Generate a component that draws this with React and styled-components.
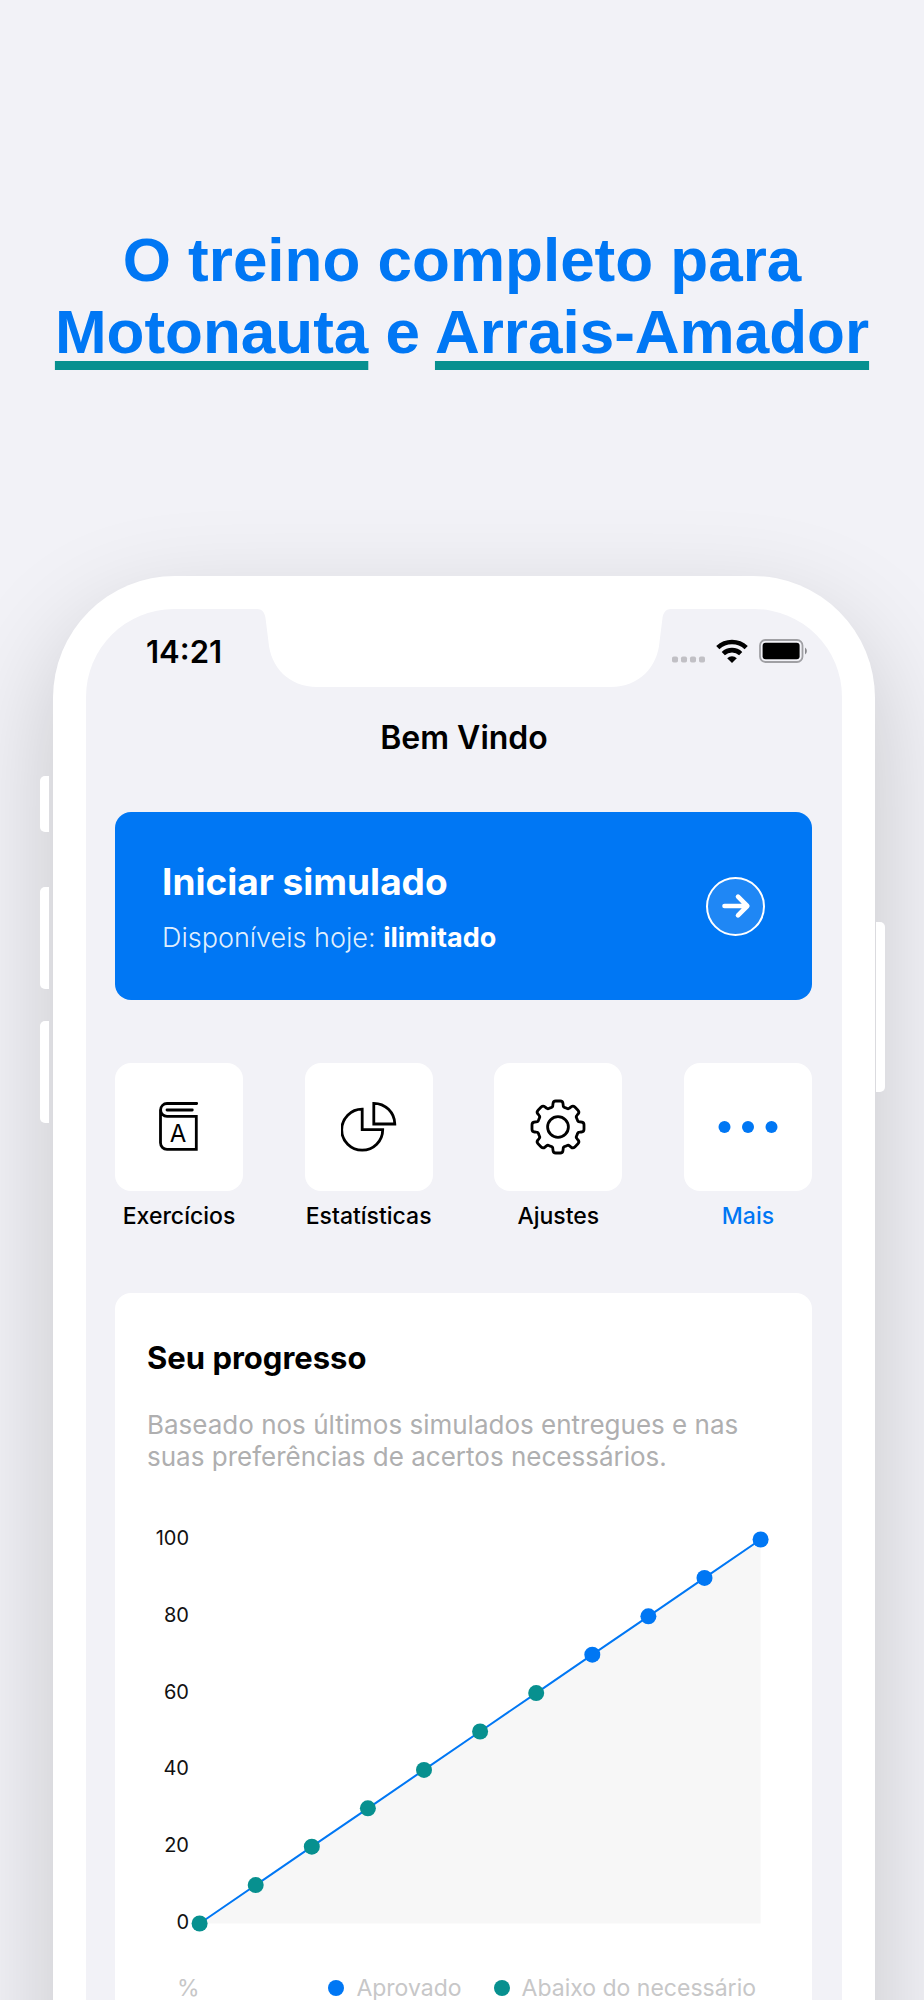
import React from "react";
import styled, { createGlobalStyle } from "styled-components";

const BLUE = "#0077f4";
const TEAL = "#07908f";

const ticks = [0, 20, 40, 60, 80, 100];
const results = [0, 10, 20, 30, 40, 50, 60, 70, 80, 90, 100];
const REQUIRED = 70;

const chartX = (i) => 52.6 + i * 56.1;
const chartY = (value) => 403.5 - value * 3.84;

// one tooth of the gear, repeated every 45 degrees
const gearPath = () => {
  const out = [];
  for (let i = 0; i < 8; i++) {
    const a = (i * Math.PI) / 4;
    const p = (x, y) =>
      `${(x * Math.cos(a) - y * Math.sin(a)).toFixed(2)} ${(
        x * Math.sin(a) +
        y * Math.cos(a)
      ).toFixed(2)}`;
    out.push(
      `${i ? "L" : "M"}${p(-7, -19.4)}`,
      `Q${p(-5.2, -19.8)} ${p(-5.2, -21.6)}`,
      `L${p(-5, -23.4)}`,
      `Q${p(-4.8, -26)} ${p(-2.2, -26)}`,
      `L${p(2.2, -26)}`,
      `Q${p(4.8, -26)} ${p(5, -23.4)}`,
      `L${p(5.2, -21.6)}`,
      `Q${p(5.2, -19.8)} ${p(7, -19.4)}`
    );
  }
  return out.join(" ") + "Z";
};

const BookIcon = () => (
  <Icon viewBox="0 0 56 56">
    <path d="M45.7 4.5H16a6.4 6.4 0 0 0 0 12.8H45.3V50.3H16a6.5 6.5 0 0 1-6.5-6.5V11" />
    <path d="M16 11H41.3" />
    <IconLetter x="27" y="42.5" textAnchor="middle">
      A
    </IconLetter>
  </Icon>
);

const PieIcon = () => (
  <Icon viewBox="0 0 56 56">
    <path d="M21.2 10.2A20.5 20.5 0 1 0 41.7 30.7H21.2Z" />
    <path d="M32.8 4.3A21 21 0 0 1 53.8 25H32.8Z" />
  </Icon>
);

const GearIcon = () => (
  <Icon viewBox="-28 -28 56 56">
    <path d={gearPath()} />
    <circle r="10.4" />
  </Icon>
);

const DotsIcon = () => (
  <Icon viewBox="-32 -28 64 56" $wide>
    <g fill={BLUE} stroke="none">
      <circle cx="-23.5" r="6" />
      <circle r="6" />
      <circle cx="23.5" r="6" />
    </g>
  </Icon>
);

const shortcuts = [
  { label: "Exercícios", icon: <BookIcon /> },
  { label: "Estatísticas", icon: <PieIcon /> },
  { label: "Ajustes", icon: <GearIcon /> },
  { label: "Mais", icon: <DotsIcon />, active: true },
];

const ProgressChart = () => {
  const line = results.map((v, i) => `${chartX(i)},${chartY(v)}`).join(" ");
  const last = chartX(results.length - 1);

  return (
    <Chart viewBox="0 0 633 420" role="img" aria-label="Seu progresso">
      <polygon
        points={`${line} ${last},${chartY(0)}`}
        fill="#f7f7f7"
      />
      <polyline points={line} fill="none" stroke={BLUE} strokeWidth="2" />
      {ticks.map((t) => (
        <ChartLabel key={t} x="42" y={chartY(t) + 5.5} textAnchor="end">
          {t}
        </ChartLabel>
      ))}
      {results.map((v, i) => (
        <circle
          key={v}
          cx={chartX(i)}
          cy={chartY(v)}
          r="8"
          fill={v >= REQUIRED ? BLUE : TEAL}
        />
      ))}
    </Chart>
  );
};

export default function App() {
  return (
    <Page>
      <GlobalStyle />
      <Headline>
        O treino completo para
        <br />
        <Underlined>Motonauta</Underlined> e{" "}
        <Underlined>Arrais-Amador</Underlined>
      </Headline>

      <Phone>
        <SideButton $side="left" $top={200} $height={56} />
        <SideButton $side="left" $top={311} $height={102} />
        <SideButton $side="left" $top={445} $height={102} />
        <SideButton $side="right" $top={346} $height={170} />

        <Screen>
          <StatusBar>
            <Time>14:21</Time>
            <Notch viewBox="0 0 414 78">
              <path
                fill="#fff"
                d="M0 0C6 0 8 5 8.500 9L11.500 33C13.500 58 32 78 60 78H354C382 78 400.500 58 402.500 33L405.500 9C406 5 408 0 414 0Z"
              />
            </Notch>
            <StatusIcons>
              <svg width="33" height="24" viewBox="0 0 33 24" fill="#c1c0c5">
                <rect x="0" y="17.500" width="6" height="6" rx="1.800" />
                <rect x="9" y="17.500" width="6" height="6" rx="1.800" />
                <rect x="18" y="17.500" width="6" height="6" rx="1.800" />
                <rect x="27" y="17.500" width="6" height="6" rx="1.800" />
              </svg>
              <svg width="32" height="24" viewBox="0 0 32 24" fill="none">
                <g stroke="#000" strokeWidth="4.600">
                  <path d="M1.800 8.700A20.500 20.500 0 0 1 30.200 8.700" />
                  <path d="M7.300 14.600A12.600 12.600 0 0 1 24.700 14.600" />
                </g>
                <path
                  fill="#000"
                  d="M16 24L11.200 19.200A7 7 0 0 1 20.800 19.200Z"
                />
              </svg>
              <svg width="49" height="24" viewBox="0 0 49 24" fill="none">
                <rect
                  x="1"
                  y="1"
                  width="42.500"
                  height="22"
                  rx="5.500"
                  stroke="#a0a0a4"
                  strokeWidth="1.800"
                />
                <rect x="3.600" y="3.800" width="37" height="16.400" rx="3" fill="#000" />
                <path d="M46 8.500A4.200 4.200 0 0 1 46 15.500Z" fill="#88888c" />
              </svg>
            </StatusIcons>
          </StatusBar>

          <ScreenTitle>Bem Vindo</ScreenTitle>

          <Content>
            <StartButton type="button">
              <span>
                <StartTitle>Iniciar simulado</StartTitle>
                <StartText>
                  Disponíveis hoje: <strong>ilimitado</strong>
                </StartText>
              </span>
              <ArrowCircle>
                <svg
                  width="30"
                  height="30"
                  viewBox="0 0 30 30"
                  fill="none"
                  stroke="#fff"
                  strokeWidth="4.600"
                  strokeLinecap="round"
                  strokeLinejoin="round"
                >
                  <path d="M3.500 15H26M17 5.700L26.300 15L17 24.300" />
                </svg>
              </ArrowCircle>
            </StartButton>

            <Shortcuts>
              {shortcuts.map((s) => (
                <Shortcut key={s.label} type="button" $active={s.active}>
                  <Tile>{s.icon}</Tile>
                  {s.label}
                </Shortcut>
              ))}
            </Shortcuts>

            <Card>
              <CardTitle>Seu progresso</CardTitle>
              <CardText>
                Baseado nos últimos simulados entregues e nas suas preferências
                de acertos necessários.
              </CardText>
              <ProgressChart />
              <Legend>
                <span>%</span>
                <LegendItems>
                  <LegendItem $color={BLUE}>Aprovado</LegendItem>
                  <LegendItem $color={TEAL}>Abaixo do necessário</LegendItem>
                </LegendItems>
              </Legend>
            </Card>
          </Content>
        </Screen>
      </Phone>
    </Page>
  );
}

const GlobalStyle = createGlobalStyle`
  * {
    box-sizing: border-box;
  }

  body {
    margin: 0;
    background: #f2f2f7;
    font-family: Inter, "Liberation Sans", sans-serif;
  }

  button {
    padding: 0;
    border: 0;
    background: none;
    font-family: inherit;
    cursor: pointer;
  }
`;

const Page = styled.main`
  display: flex;
  flex-direction: column;
  min-height: 100vh;
  overflow: hidden;
`;

const Headline = styled.h1`
  margin: 0;
  padding: 224px 24px 208px;
  color: ${BLUE};
  font-family: "Liberation Sans", Arial, sans-serif;
  font-size: 62px;
  font-weight: 700;
  line-height: 72px;
  text-align: center;
`;

const Underlined = styled.span`
  text-decoration: underline ${TEAL} 9px;
  text-underline-offset: 8px;
  text-decoration-skip-ink: none;
`;

/* the body runs on below the fold, so its lower edge never shows */
const Phone = styled.section`
  position: relative;
  flex: 1 0 auto;
  display: flex;
  margin: 0 49px -200px 53px;
  padding: 33px 33px 0;
  border-radius: 122px 122px 0 0;
  background: #fff;
  box-shadow: 0 40px 110px rgba(0, 0, 0, 0.19);
`;

const SideButton = styled.span`
  position: absolute;
  top: ${(p) => p.$top}px;
  ${(p) => p.$side}: ${(p) => (p.$side === "left" ? "-13px" : "-10px")};
  width: 9px;
  height: ${(p) => p.$height}px;
  border-radius: ${(p) => (p.$side === "left" ? "5px 0 0 5px" : "0 5px 5px 0")};
  background: #fff;
`;

const Screen = styled.div`
  flex: 1;
  min-width: 0;
  border-radius: 88px 88px 0 0;
  background: #f2f2f7;
  overflow: hidden;
`;

const StatusBar = styled.div`
  display: grid;
  grid-template-columns: 1fr 414px 1fr;
  height: 78px;
`;

const Time = styled.span`
  padding: 25px 0 0 60px;
  font-size: 31px;
  font-weight: 600;
  line-height: 36px;
`;

const Notch = styled.svg`
  display: block;
  width: 414px;
  height: 78px;
`;

const StatusIcons = styled.div`
  display: flex;
  gap: 11px;
  padding: 30px 0 0 1px;
`;

const ScreenTitle = styled.h2`
  margin: 31px 0 54px;
  font-size: 32px;
  font-weight: 600;
  line-height: 40px;
  text-align: center;
`;

const Content = styled.div`
  padding: 0 30px 0 29px;
`;

const StartButton = styled.button`
  display: flex;
  align-items: center;
  justify-content: space-between;
  width: 100%;
  height: 188px;
  padding: 0 47px;
  border-radius: 16px;
  background: ${BLUE};
  color: #fff;
  text-align: left;
`;

const StartTitle = styled.span`
  display: block;
  margin-bottom: 16px;
  font-size: 37px;
  font-weight: 700;
  line-height: 48px;
`;

const StartText = styled.span`
  display: block;
  color: rgba(255, 255, 255, 0.9);
  font-size: 27px;
  font-weight: 300;
  line-height: 32px;

  strong {
    color: #fff;
    font-weight: 700;
  }
`;

const ArrowCircle = styled.span`
  display: flex;
  align-items: center;
  justify-content: center;
  width: 59px;
  height: 59px;
  border: 2px solid #fff;
  border-radius: 50%;
  background: rgba(255, 255, 255, 0.12);
`;

const Shortcuts = styled.div`
  display: flex;
  justify-content: space-between;
  margin: 63px 0;
`;

const Shortcut = styled.button`
  width: 128px;
  color: ${(p) => (p.$active ? BLUE : "#000")};
  font-size: 23px;
  font-weight: 500;
  line-height: 28px;
`;

const Tile = styled.span`
  display: flex;
  align-items: center;
  justify-content: center;
  height: 128px;
  margin-bottom: 11px;
  border-radius: 16px;
  background: #fff;
`;

const Icon = styled.svg`
  width: ${(p) => (p.$wide ? 64 : 56)}px;
  height: 56px;
  fill: none;
  stroke: #000;
  stroke-width: 2.8;
  stroke-linecap: round;
`;

const IconLetter = styled.text`
  fill: #000;
  stroke: none;
  font-size: 24px;
  font-weight: 400;
`;

const Card = styled.section`
  padding: 43px 32px 120px;
  border-radius: 16px;
  background: #fff;
`;

const CardTitle = styled.h3`
  margin: 0 0 29px;
  font-size: 31px;
  font-weight: 700;
  line-height: 44px;
`;

const CardText = styled.p`
  margin: 0 0 47px;
  color: #afafb0;
  font-size: 26px;
  line-height: 32px;
`;

const Chart = styled.svg`
  display: block;
  width: 100%;
`;

const ChartLabel = styled.text`
  fill: #111;
  font-size: 20px;
`;

const Legend = styled.div`
  display: flex;
  justify-content: space-between;
  margin-top: 32px;
  padding: 0 24px 0 30px;
  color: #c7c7c8;
  font-size: 23px;
  line-height: 32px;
`;

const LegendItems = styled.div`
  display: flex;
  gap: 32px;
`;

const LegendItem = styled.span`
  display: flex;
  align-items: center;
  gap: 12px;

  &::before {
    content: "";
    width: 16px;
    height: 16px;
    border-radius: 50%;
    background: ${(p) => p.$color};
  }
`;
